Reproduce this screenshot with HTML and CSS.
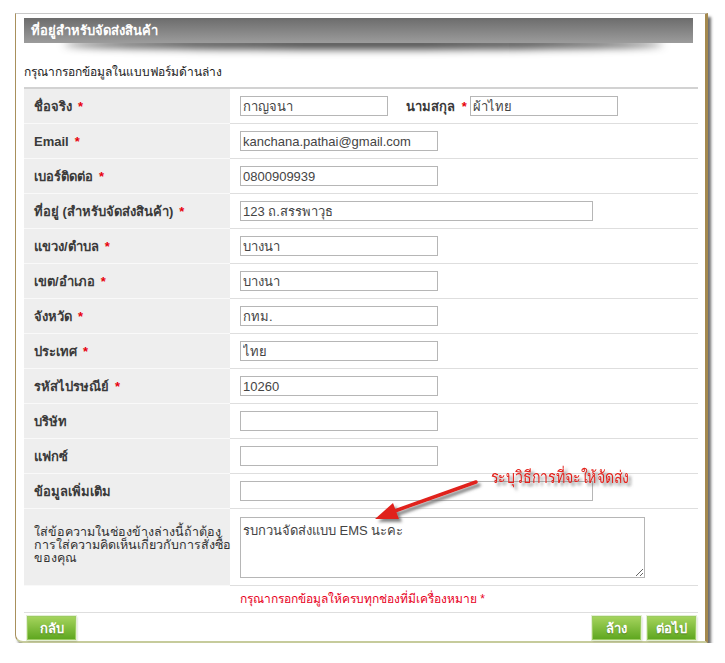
FILE: index.html
```html
<!DOCTYPE html>
<html lang="th">
<head>
    <meta charset="UTF-8">
    <title>ที่อยู่สำหรับจัดส่งสินค้า</title>
    <link rel="stylesheet" href="styles.css">
</head>
<body>
    <div class="panel">
        <div class="panel-title">ที่อยู่สำหรับจัดส่งสินค้า</div>
        <p class="intro">กรุณากรอกข้อมูลในแบบฟอร์มด้านล่าง</p>

        <form class="form-table">
            <div class="row">
                <div class="label">ชื่อจริง <span class="req">*</span></div>
                <div class="field">
                    <input type="text" class="w-short" value="กาญจนา">
                    <span class="inline-label">นามสกุล <span class="req">*</span></span>
                    <input type="text" class="w-short" value="ผ้าไทย">
                </div>
            </div>
            <div class="row">
                <div class="label">Email <span class="req">*</span></div>
                <div class="field"><input type="text" class="w-mid" value="kanchana.pathai@gmail.com"></div>
            </div>
            <div class="row">
                <div class="label">เบอร์ติดต่อ <span class="req">*</span></div>
                <div class="field"><input type="text" class="w-mid" value="0800909939"></div>
            </div>
            <div class="row">
                <div class="label">ที่อยู่ (สำหรับจัดส่งสินค้า) <span class="req">*</span></div>
                <div class="field"><input type="text" class="w-long" value="123 ถ.สรรพาวุธ"></div>
            </div>
            <div class="row">
                <div class="label">แขวง/ตำบล <span class="req">*</span></div>
                <div class="field"><input type="text" class="w-mid" value="บางนา"></div>
            </div>
            <div class="row">
                <div class="label">เขต/อำเภอ <span class="req">*</span></div>
                <div class="field"><input type="text" class="w-mid" value="บางนา"></div>
            </div>
            <div class="row">
                <div class="label">จังหวัด <span class="req">*</span></div>
                <div class="field"><input type="text" class="w-mid" value="กทม."></div>
            </div>
            <div class="row">
                <div class="label">ประเทศ <span class="req">*</span></div>
                <div class="field"><input type="text" class="w-mid" value="ไทย"></div>
            </div>
            <div class="row">
                <div class="label">รหัสไปรษณีย์ <span class="req">*</span></div>
                <div class="field"><input type="text" class="w-mid" value="10260"></div>
            </div>
            <div class="row">
                <div class="label">บริษัท</div>
                <div class="field"><input type="text" class="w-mid"></div>
            </div>
            <div class="row">
                <div class="label">แฟกซ์</div>
                <div class="field"><input type="text" class="w-mid"></div>
            </div>
            <div class="row">
                <div class="label">ข้อมูลเพิ่มเติม</div>
                <div class="field"><input type="text" class="w-long"></div>
            </div>
            <div class="row row-tall">
                <div class="label label-plain">ใส่ข้อความในช่องข้างล่างนี้ถ้าต้อง<br>การใส่ความคิดเห็นเกี่ยวกับการสั่งซื้อ<br>ของคุณ</div>
                <div class="field"><textarea class="comment">รบกวนจัดส่งแบบ EMS นะคะ</textarea></div>
            </div>
            <div class="message">กรุณากรอกข้อมูลให้ครบทุกช่องที่มีเครื่องหมาย *</div>

            <div class="buttons">
                <button type="button" class="btn">กลับ</button>
                <div class="btn-group">
                    <button type="reset" class="btn">ล้าง</button>
                    <button type="submit" class="btn">ต่อไป</button>
                </div>
            </div>
        </form>

        <!-- คำอธิบายลูกศรสีแดง -->
        <svg class="note" width="290" height="80" viewBox="0 0 290 80">
            <defs>
                <filter id="shade" x="-20%" y="-50%" width="140%" height="200%">
                    <feDropShadow dx="3" dy="3" stdDeviation="1.6" flood-color="#666" flood-opacity="0.8"/>
                </filter>
            </defs>
            <g filter="url(#shade)">
                <text x="130" y="27" font-size="17" fill="#e3231c" textLength="138" lengthAdjust="spacingAndGlyphs">ระบุวิธีการที่จะให้จัดส่ง</text>
                <line x1="115" y1="26" x2="31" y2="56" stroke="#e0201c" stroke-width="3.5" stroke-linecap="round"/>
                <polygon points="14,63 38,63 32,47" fill="#e0201c"/>
            </g>
        </svg>
    </div>
</body>
</html>
```

FILE: styles.css
```css
body {
    margin: 0;
    background: #fff;
    font-family: "Liberation Sans", Arial, sans-serif;
    color: #333;
}
.panel {
    position: relative;
    z-index: 0;
    width: 693px;
    height: 630px;
    margin: 13px 0 0 15px;
    padding: 4px 7px 0 8px;
    box-sizing: border-box;
    background: #fff;
    border-top: 1px solid #c8c8c8;
    border-left: 1px solid #a8905c;
    border-right: 3px solid #a4894e;
    border-bottom: 2px solid #c6cb9c;
    border-bottom-left-radius: 8px;
    box-shadow: 3px 4px 3px rgba(60, 60, 60, 0.75);
}
.panel-title {
    position: relative;
    width: 669px;
    height: 25px;
    line-height: 25px;
    padding-left: 7px;
    box-sizing: border-box;
    background: linear-gradient(#6c6c6c, #9c9c9c);
    color: #fff;
    font-size: 13px;
    font-weight: bold;
}
.panel-title::after {
    content: '';
    position: absolute;
    left: 40px;
    right: 30px;
    bottom: 3px;
    height: 10px;
    border-radius: 50%;
    box-shadow: 0 9px 8px rgba(0, 0, 0, 0.8);
    z-index: -1;
}
.intro {
    margin: 20px 0 6px;
    height: 18px;
    line-height: 18px;
    font-size: 12px;
    color: #222;
}
.form-table {
    width: 674px;
    margin: 0;
    border-top: 2px solid #d2d2d2;
}
.row {
    display: grid;
    grid-template-columns: 206px 1fr;
    height: 35px;
}
.row-tall {
    height: 77px;
}
.label {
    display: flex;
    align-items: center;
    padding-left: 10px;
    background: #eeeeee;
    border-bottom: 1px solid #f9f9f9;
    font-size: 13px;
    font-weight: bold;
    color: #3a3a3a;
    white-space: nowrap;
}
.label-plain {
    display: block;
    padding-top: 17px;
    box-sizing: border-box;
    font-weight: normal;
    font-size: 12.5px;
    line-height: 13px;
    color: #333;
}
.req {
    color: #e8000c;
    margin-left: 6px;
}
.field {
    display: flex;
    align-items: center;
    padding-left: 10px;
    border-bottom: 1px solid #dedede;
}
.inline-label {
    margin: 0 3px 0 18px;
    font-size: 13px;
    font-weight: bold;
    color: #3a3a3a;
}
.inline-label .req {
    margin-left: 3px;
}
.field input,
.comment {
    height: 20px;
    padding: 0 2px;
    box-sizing: border-box;
    border: 1px solid #b6b6b6;
    font-family: "Liberation Sans", Arial, sans-serif;
    font-size: 13px;
    color: #444;
    background: #fff;
}
.w-short {
    width: 148px;
}
.w-mid {
    width: 198px;
}
.w-long {
    width: 353px;
}
.comment {
    width: 405px;
    height: 61px;
    padding: 2px;
    resize: both;
}
.message {
    height: 26px;
    line-height: 26px;
    padding-left: 216px;
    border-bottom: 1px solid #dedede;
    font-size: 12px;
    color: #e8001c;
}
.buttons {
    display: flex;
    justify-content: space-between;
    padding: 3px 2px 0 3px;
}
.btn-group {
    display: flex;
    gap: 6px;
}
.btn {
    width: 49px;
    height: 24px;
    padding: 0;
    border: 1px solid #9ccc62;
    background: linear-gradient(#a4d35c, #5fa720);
    box-shadow: 0 0 0 1px #e4efd4, 1px 1px 2px rgba(0, 0, 0, 0.25);
    color: #fff;
    font-family: "Liberation Sans", Arial, sans-serif;
    font-size: 13px;
    font-weight: bold;
    text-shadow: 0 1px 1px rgba(0, 0, 0, 0.3);
    cursor: pointer;
}
.note {
    position: absolute;
    left: 345px;
    top: 442px;
    overflow: visible;
}
.note text {
    font-family: "Liberation Serif", serif;
}
```
